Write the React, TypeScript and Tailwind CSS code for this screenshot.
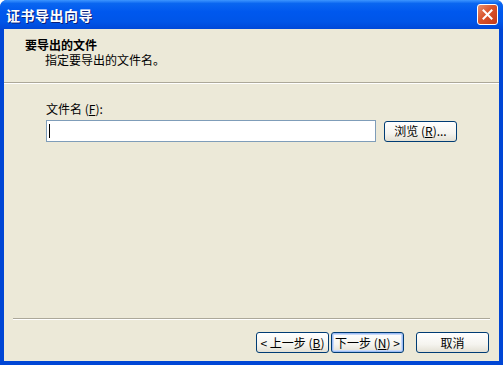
import React from "react";

const font = { fontFamily: '"Noto Sans CJK SC", "Noto Sans", sans-serif' };

function XPButton({ children, def = false, className = "" }: { children: React.ReactNode; def?: boolean; className?: string }) {
  return (
    <div
      className={
        "w-[73px] h-[21px] rounded-[3px] border border-[#003C74] flex items-center justify-center text-[12px] leading-none text-black bg-[linear-gradient(to_bottom,#FFFFFF_0%,#F5F4EF_60%,#E3E0D4_100%)] " +
        (def ? "shadow-[inset_0_0_0_1px_#9DBCF5,inset_0_0_0_2px_#C9DAF8] " : "") +
        className
      }
    >
      {children}
    </div>
  );
}

export default function App() {
  return (
    <div style={font} className="w-[503px] h-[365px] bg-[#0046D5] rounded-t-[7px] flex flex-col overflow-hidden">
      {/* Title bar */}
      <div className="h-[29px] shrink-0 flex items-center justify-between pl-[6px] pr-[5px] bg-[linear-gradient(to_bottom,#3D95FF_0%,#0A66F0_12%,#0058EE_40%,#0055E8_75%,#0048D8_100%)]">
        <span className="text-white font-bold text-[14px] leading-none tracking-[0.5px] [text-shadow:1px_1px_0_#0A1E7A]">证书导出向导</span>
        <div className="w-[21px] h-[21px] rounded-[3px] border border-white flex items-center justify-center bg-[linear-gradient(135deg,#E8906E_0%,#D9532C_45%,#C4391A_100%)]">
          <svg width="11" height="11" viewBox="0 0 11 11">
            <path d="M1.5 1.5 L9.5 9.5 M9.5 1.5 L1.5 9.5" stroke="white" strokeWidth="2" strokeLinecap="square" />
          </svg>
        </div>
      </div>
      {/* Body */}
      <div className="flex-1 mx-[4px] mb-[4px] bg-[#ECE9D8] flex flex-col text-[12px] text-black">
        {/* Header */}
        <div className="h-[53px] shrink-0 pt-[9px] pl-[21px] flex flex-col">
          <div className="font-bold leading-[14px]">要导出的文件</div>
          <div className="pl-[20px] leading-[14px] mt-[1px]">指定要导出的文件名。</div>
        </div>
        <div className="h-[2px] shrink-0 border-t border-[#ACA899] border-b border-b-white" />
        {/* Content */}
        <div className="pl-[42px] pt-[18px] flex flex-col">
          <div className="leading-[14px]">文件名 (<span className="underline">F</span>):</div>
          <div className="flex items-center mt-[4px] gap-[8px]">
            <div className="w-[330px] h-[22px] border border-[#7F9DB9] bg-white flex items-center pl-[2px]">
              <div className="w-[1px] h-[14px] bg-black" />
            </div>
            <XPButton>浏览 (<span className="underline">R</span>)...</XPButton>
          </div>
        </div>
        <div className="flex-1" />
        {/* Bottom separator */}
        <div className="h-[2px] mx-[9px] shrink-0 border-t border-[#ACA899] border-b border-b-white" />
        <div className="flex justify-end items-center pt-[12px] pb-[8px] pr-[10px]">
          <XPButton>&lt; 上一步 (<span className="underline">B</span>)</XPButton>
          <XPButton def className="ml-[2px]">下一步 (<span className="underline">N</span>) &gt;</XPButton>
          <XPButton className="ml-[12px]">取消</XPButton>
        </div>
      </div>
    </div>
  );
}
